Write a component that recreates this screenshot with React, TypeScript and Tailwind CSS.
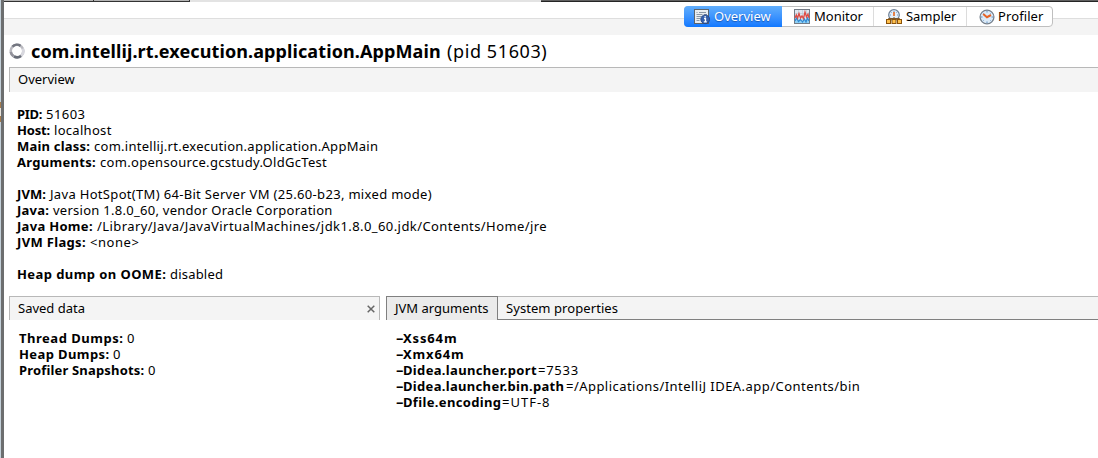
import type { ReactNode } from "react";

function OverviewIcon() {
  return (
    <svg width="16" height="16" viewBox="0 0 16 16" className="shrink-0">
      <rect x="0.5" y="0.5" width="14" height="14" fill="#e9edf1" stroke="#5d646c" />
      <path d="M2.5 3.5h1M5 3.5h7M2.5 5.5h6M10 5.5h3M2.5 7.5h5M2.5 9.5h4M2.5 11.5h3" stroke="#8b97a5" />
      <circle cx="11.2" cy="10.3" r="4.4" fill="#3560ad" stroke="#21407e" strokeWidth="0.8" />
      <path d="M10.4 7.8h1.6M10 9.6h1.5v3M9.8 12.8h3" stroke="#fff" strokeWidth="1.3" fill="none" />
    </svg>
  );
}

function MonitorIcon() {
  return (
    <svg width="16" height="16" viewBox="0 0 16 16" className="shrink-0">
      <rect x="0.5" y="0.5" width="15" height="14" fill="#dfe8f1" stroke="#737b86" />
      <path d="M4.5 1v13M8.5 1v13M12.5 1v13M1 4.5h14" stroke="#b9c6d4" strokeWidth="0.6" />
      <path d="M1 14V11l1-2 2 3 2-2 2 3 2-3 1.500 2 1.500-4 2 2v4z" fill="#8fd0f5" />
      <path d="M1 12l1.500-3 2 3.500 2-2 2 2.500 2-3 1.500 3 1.500-4 1.500 3" stroke="#2f8bd6" fill="none" strokeWidth="1.200" />
      <path d="M1 9l1.300-3 1.200 3L5 4.500 6.500 9 8 7l1.500 2.500L11 3l1.500 5L14 5l1 4" stroke="#df4c45" fill="none" strokeWidth="1.300" />
    </svg>
  );
}

function SamplerIcon() {
  return (
    <svg width="16" height="16" viewBox="0 0 16 16" className="shrink-0">
      <circle cx="8" cy="6" r="5.300" fill="#e3effa" stroke="#6c7f96" strokeWidth="1.200" />
      <path d="M8 2v1M4 6h1M11 6h1M5.200 3.200l.6.6M10.800 3.200l-.6.6" stroke="#5481b5" strokeWidth="0.8" />
      <path d="M8 3v4" stroke="#e46d28" strokeWidth="1.700" />
      <path d="M2.500 11V9.500h11V11M8 8v3" stroke="#7b562b" fill="none" />
      <rect x="0.500" y="10.500" width="4" height="4" fill="#ffc04d" stroke="#8a520a" />
      <rect x="6" y="10.500" width="4" height="4" fill="#ffc04d" stroke="#8a520a" />
      <rect x="11.500" y="10.500" width="4" height="4" fill="#ffc04d" stroke="#8a520a" />
    </svg>
  );
}

function ProfilerIcon() {
  return (
    <svg width="16" height="16" viewBox="0 0 16 16" className="shrink-0">
      <circle cx="8" cy="8" r="6.900" fill="#dcebf8" stroke="#77818c" strokeWidth="1.300" />
      <path d="M8 2v1.500M8 12.500V14M2 8h1.500M12.500 8H14M3.800 3.800l.7.7M11.500 11.500l.7.7M3.800 12.200l.7-.7M11.500 4.500l.7-.7" stroke="#5d8fc4" />
      <path d="M4.200 5L8 8.200 12 6" fill="none" stroke="#e66425" strokeWidth="2" />
    </svg>
  );
}

function Spinner() {
  return (
    <svg width="16" height="16" viewBox="0 0 16 16" className="shrink-0" fill="none" strokeWidth="2.600">
      <circle cx="8" cy="8" r="6.300" stroke="#b9b9bf" />
      <path d="M3.500 3.600A6.300 6.300 0 0 1 11.500 2.800" stroke="#737680" />
      <path d="M13.800 5.500A6.300 6.300 0 0 1 12.300 12.600" stroke="#d8d8df" />
      <path d="M12 12.900A6.300 6.300 0 0 1 5 13.500" stroke="#666b76" />
      <path d="M4.500 13.200A6.300 6.300 0 0 1 1.800 9" stroke="#92929b" />
    </svg>
  );
}

function Dash() {
  return <span className="inline-block w-[7px] origin-left scale-x-[1.8] tracking-normal">-</span>;
}

type Row = { key: ReactNode; width: string; keySpacing: string; value?: string; spacing?: string };

const application: Row[] = [
  { key: "PID:", width: "w-[29px]", keySpacing: "-tracking-[0.32px]", value: "51603", spacing: "tracking-[0.45px]" },
  { key: "Host:", width: "w-[37px]", keySpacing: "-tracking-[0.18px]", value: "localhost", spacing: "tracking-[0.3px]" },
  { key: "Main class:", width: "w-[77px]", keySpacing: "tracking-[0.2px]", value: "com.intellij.rt.execution.application.AppMain", spacing: "tracking-[0.27px]" },
  { key: "Arguments:", width: "w-[83px]", keySpacing: "tracking-[0.29px]", value: "com.opensource.gcstudy.OldGcTest", spacing: "tracking-[0.31px]" },
];

const jvm: Row[] = [
  { key: "JVM:", width: "w-[33px]", keySpacing: "tracking-[0.08px]", value: "Java HotSpot(TM) 64-Bit Server VM (25.60-b23, mixed mode)", spacing: "tracking-[0.32px]" },
  { key: "Java:", width: "w-[36px]", keySpacing: "tracking-[0.21px]", value: "version 1.8.0_60, vendor Oracle Corporation", spacing: "tracking-[0.27px]" },
  { key: "Java Home:", width: "w-[80px]", keySpacing: "tracking-[0.3px]", value: "/Library/Java/JavaVirtualMachines/jdk1.8.0_60.jdk/Contents/Home/jre", spacing: "tracking-[0.42px]" },
  { key: "JVM Flags:", width: "w-[73px]", keySpacing: "tracking-[0.33px]", value: "<none>", spacing: "tracking-[0.55px]" },
];

const heap: Row[] = [
  { key: "Heap dump on OOME:", width: "w-[153px]", keySpacing: "tracking-[0.42px]", value: "disabled", spacing: "tracking-[0.2px]" },
];

const saved: Row[] = [
  { key: "Thread Dumps:", width: "w-[108px]", keySpacing: "tracking-[0.52px]", value: "0" },
  { key: "Heap Dumps:", width: "w-[94px]", keySpacing: "tracking-[0.4px]", value: "0" },
  { key: "Profiler Snapshots:", width: "w-[129px]", keySpacing: "tracking-[0.17px]", value: "0" },
];

const args: Row[] = [
  { key: <><Dash />Xss64m</>, width: "w-[63px]", keySpacing: "tracking-[0.85px]" },
  { key: <><Dash />Xmx64m</>, width: "w-[71px]", keySpacing: "tracking-[0.85px]" },
  { key: <><Dash />Didea.launcher.port</>, width: "w-[142px]", keySpacing: "tracking-[0.34px]", value: "=7533", spacing: "tracking-[0.75px]" },
  { key: <><Dash />Didea.launcher.bin.path</>, width: "w-[170px]", keySpacing: "tracking-[0.32px]", value: "=/Applications/IntelliJ IDEA.app/Contents/bin", spacing: "tracking-[0.46px]" },
  { key: <><Dash />Dfile.encoding</>, width: "w-[106px]", keySpacing: "tracking-[0.35px]", value: "=UTF-8", spacing: "tracking-[1px]" },
];

function Rows({ rows }: { rows: Row[] }) {
  return (
    <div>
      {rows.map((row, i) => (
        <div key={i} className="flex h-4 leading-4">
          <span className={`shrink-0 font-bold ${row.width} ${row.keySpacing}`}>{row.key}</span>
          <span className={row.spacing}>{row.value}</span>
        </div>
      ))}
    </div>
  );
}

export default function App() {
  return (
    <div className="flex h-[458px] w-[1098px] overflow-hidden whitespace-nowrap bg-white font-['Noto_Sans',sans-serif] text-[13px] text-black">
      <div className="flex w-1 shrink-0">
        <div className="w-px bg-[#c3d0d9]">
          <div className="mt-[102px] h-[6px] bg-[#a57b4c]" />
          <div className="h-2 bg-[#e8e4de]" />
          <div className="h-[6px] bg-[#a57b4c]" />
        </div>
        <div className="w-[3px] bg-[#6c6e6f]" />
      </div>

      <div className="flex min-w-0 flex-1 flex-col">
        <div className="flex h-[2px] shrink-0">
          <div className="w-[89px] border-b border-[#333] bg-[#b4b4b4]" />
          <div className="w-px bg-[#333]" />
          <div className="w-[95px] border-b border-[#333] bg-[#b4b4b4]" />
          <div className="w-px bg-[#333]" />
          <div className="w-[351px] bg-[#e3e3e3]" />
          <div className="flex-1 border-b border-[#252525] bg-[#606060]" />
        </div>

        <div className="flex h-[33px] shrink-0 justify-end bg-[linear-gradient(to_bottom,white_16px,#dedede_16px,#dedede_17px,#f4f4f4_17px)] pr-[45px] pt-1">
          <div className="flex h-[21px] w-[369px] rounded-[4px] border border-[#bfbfbf] bg-white leading-[19px]">
            <div className="-my-px -ml-px flex w-[98px] shrink-0 items-center gap-1 rounded-l-[4px] bg-linear-to-b from-[#61aefc] to-[#0f78ff] pl-[10px] text-white [text-shadow:0_1px_1px_#1758b5]">
              <OverviewIcon />
              <span>Overview</span>
            </div>
            <div className="flex w-[92px] shrink-0 items-center gap-1 border-r border-[#dcdcdc] pl-3">
              <MonitorIcon />
              <span>Monitor</span>
            </div>
            <div className="flex w-[93px] shrink-0 items-center gap-1 border-r border-[#dcdcdc] pl-3">
              <SamplerIcon />
              <span className="-tracking-[0.05px]">Sampler</span>
            </div>
            <div className="flex items-center gap-[3px] pl-3">
              <ProfilerIcon />
              <span className="tracking-[0.1px]">Profiler</span>
            </div>
          </div>
        </div>

        <div className="flex h-8 shrink-0 items-center pl-[5px] text-[18px] leading-8">
          <Spinner />
          <span className="ml-[6px] w-[416px] shrink-0 font-bold tracking-[0.1px]">com.intellij.rt.execution.application.AppMain</span>
          <span className="tracking-[0.6px]">(pid 51603)</span>
        </div>

        <div className="ml-[5px] h-[25px] shrink-0 border-l border-t border-[#b8b8b8] bg-[#f4f4f4] pl-2 leading-[23px]">
          Overview
        </div>

        <div className="flex h-[204px] shrink-0 flex-col gap-4 pl-[13px] pt-[14px]">
          <Rows rows={application} />
          <Rows rows={jvm} />
          <Rows rows={heap} />
        </div>

        <div className="flex min-h-0 flex-1 gap-[6px] pl-[5px]">
          <section className="w-[371px] shrink-0">
            <div className="flex h-6 justify-between border-l border-r border-t border-[#b8b8b8] bg-[#f4f4f4] pl-2 pr-1 leading-[23px]">
              <span>Saved data</span>
              <svg width="8" height="8" viewBox="0 0 8 8" className="mt-2">
                <path d="M.7.7l6.600 6.600M7.300.7L.7 7.300" stroke="#666" strokeWidth="1.500" />
              </svg>
            </div>
            <div className="pl-[10px] pt-[10px]">
              <Rows rows={saved} />
            </div>
          </section>

          <section className="min-w-0 flex-1">
            <div className="flex h-6 leading-[23px]">
              <div className="w-[112px] shrink-0 border border-b-0 border-[#808080] bg-[#ebebeb] pl-2">JVM arguments</div>
              <div className="flex-1 border-b border-t border-b-[#808080] border-t-[#b8b8b8] bg-[#f4f4f4] pl-2 tracking-[0.07px]">System properties</div>
            </div>
            <div className="pl-[10px] pt-[10px]">
              <Rows rows={args} />
            </div>
          </section>
        </div>
      </div>
    </div>
  );
}
